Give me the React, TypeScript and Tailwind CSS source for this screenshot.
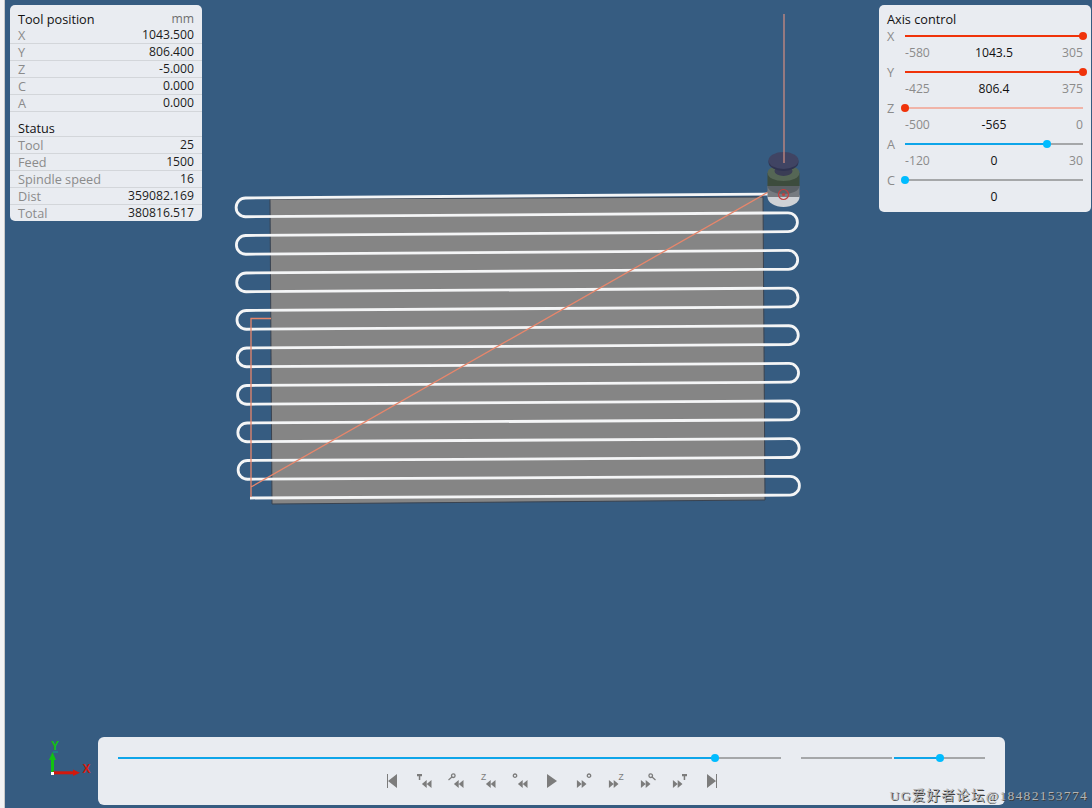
import React from "react";

const font = "[font-family:'Open_Sans','Noto_Sans',sans-serif]";

function Row({ label, value, last }: { label: string; value: string; last?: boolean }) {
  return (
    <div className={`flex items-center justify-between px-2 ${last ? "h-[16px]" : "h-[17px] border-b border-[#d3d6da]"}`}>
      <span className="text-[12.7px] text-[#8b8b8b]">{label}</span>
      <span className="text-[12.2px] text-[#1c1c1c]">{value}</span>
    </div>
  );
}

function ToolPanel() {
  return (
    <div className="w-[192px] h-[216px] rounded-[5px] bg-[#e9ecf1] pt-[5px] leading-[16px] overflow-hidden">
      <div className="flex h-[17px] items-center justify-between px-2">
        <span className="text-[12.7px] text-[#111]">Tool position</span>
        <span className="text-[12.2px] text-[#6f6f6f]">mm</span>
      </div>
      <Row label="X" value="1043.500" />
      <Row label="Y" value="806.400" />
      <Row label="Z" value="-5.000" />
      <Row label="C" value="0.000" />
      <Row label="A" value="0.000" />
      <div className="mt-[8px] flex h-[17px] items-center border-b border-[#d3d6da] px-2 text-[12.7px] text-[#111]">Status</div>
      <Row label="Tool" value="25" />
      <Row label="Feed" value="1500" />
      <Row label="Spindle speed" value="16" />
      <Row label="Dist" value="359082.169" />
      <Row label="Total" value="380816.517" last />
    </div>
  );
}

function Slider({ fill, fillClass, trackClass, knobClass }: { fill: number; fillClass: string; trackClass: string; knobClass: string }) {
  return (
    <div className={`relative h-[2px] w-full ${trackClass}`}>
      <div className={`h-full ${fillClass}`} style={{ width: `${fill}%` }} />
      <div className={`absolute top-[-3px] ml-[-4px] h-[8px] w-[8px] rounded-full ${knobClass}`} style={{ left: `${fill}%` }} />
    </div>
  );
}

function Axis({ name, min, value, max, fill, tone }: { name: string; min: string; value: string; max: string; fill: number; tone: "red" | "pale" | "blue" }) {
  const fillClass = tone === "blue" ? "bg-[#0ea5e9]" : "bg-[#f0330a]";
  const trackClass = tone === "pale" ? "bg-[#f0b4a8]" : "bg-[#a5a7a9]";
  const knobClass = tone === "blue" ? "bg-[#00bcff]" : "bg-[#f0330a]";
  return (
    <div>
      <div className="flex h-[18px] items-center">
        <span className="w-[18px] text-[12.7px] text-[#8b8b8b]">{name}</span>
        <div className="flex-1">
          <Slider fill={fill} fillClass={fillClass} trackClass={trackClass} knobClass={knobClass} />
        </div>
      </div>
      <div className="mb-[8px] ml-[18px] grid h-[10px] grid-cols-3 items-center text-[12.2px]">
        <span className="text-[#8b8b8b]">{min}</span>
        <span className="text-center text-[#111]">{value}</span>
        <span className="text-right text-[#8b8b8b]">{max}</span>
      </div>
    </div>
  );
}

function AxisPanel() {
  return (
    <div className="w-[212px] h-[207px] rounded-[5px] bg-[#e9ecf1] pt-[5px] pl-2 pr-2 leading-[16px]">
      <div className="h-[17px] flex items-center text-[12.7px] text-[#111]">Axis control</div>
      <Axis name="X" min="-580" value="1043.5" max="305" fill={100} tone="red" />
      <Axis name="Y" min="-425" value="806.4" max="375" fill={100} tone="red" />
      <Axis name="Z" min="-500" value="-565" max="0" fill={0} tone="pale" />
      <Axis name="A" min="-120" value="0" max="30" fill={80} tone="blue" />
      <Axis name="C" min="" value="0" max="" fill={0} tone="blue" />
    </div>
  );
}

const ICON = "#7c7c7c";

function Rewind() {
  return <path d="M7 9 L2.2 13 L7 17Z M11.8 9 L7 13 L11.8 17Z" fill={ICON} />;
}

function Mark({ kind }: { kind: "T" | "D" | "Z" | "O" }) {
  if (kind === "T") return <path d="M0.5 3 H5.5 V5.2 H3.8 V9 H2.3 V5.2 H0.5Z" fill={ICON} />;
  if (kind === "D")
    return (
      <g fill="none" stroke={ICON}>
        <circle cx="4.8" cy="4.7" r="1.8" strokeWidth="1.3" />
        <path d="M3.4 6 L0 9" strokeWidth="1.2" />
      </g>
    );
  if (kind === "Z")
    return (
      <text x="0.5" y="9" fontSize="8.5" fill={ICON} fontFamily="'Liberation Sans',sans-serif">
        Z
      </text>
    );
  return <circle cx="2.5" cy="4.7" r="1.7" fill="none" stroke={ICON} strokeWidth="1.3" />;
}

function PlayIcon({ kind }: { kind: string }) {
  return (
    <svg viewBox="0 0 20 20" className="h-5 w-5">
      {kind === "start" && <path d="M5 3 H6 V17 H5Z M15 3 V17 L6 10Z" fill={ICON} />}
      {kind === "end" && <path d="M14 3 H15 V17 H14Z M5 3 V17 L14 10Z" fill={ICON} />}
      {kind === "play" && <path d="M5 3 V17 L15 10Z" fill={ICON} />}
      {["T", "D", "Z", "O"].includes(kind) && (
        <g>
          <g transform="translate(2.5,0)">
            <Mark kind={kind as "T"} />
          </g>
          <g transform="translate(5.7,0)">
            <Rewind />
          </g>
        </g>
      )}
      {["t", "d", "z", "o"].includes(kind) && (
        <g transform="matrix(-1 0 0 1 20 0)">
          <g transform="translate(5.3,0)">
            <Rewind />
          </g>
          {kind === "z" ? (
            <g transform="matrix(-1 0 0 1 8 0)">
              <Mark kind="Z" />
            </g>
          ) : (
            <g transform="translate(2.5,0)">
              <Mark kind={kind.toUpperCase() as "T"} />
            </g>
          )}
        </g>
      )}
    </svg>
  );
}

function BottomPanel() {
  const icons = ["start", "T", "D", "Z", "O", "play", "o", "z", "d", "t", "end"];
  return (
    <div className="h-[68px] w-[907px] rounded-[6px] bg-[#e9ecf1] pl-5 pr-5 pt-[20px]">
      <div className="flex items-center">
        <div className="w-[663px]">
          <Slider fill={90} fillClass="bg-[#0ea5e9]" trackClass="bg-[#a5a7a9]" knobClass="bg-[#00bcff]" />
        </div>
        <div className="ml-5 h-[2px] w-[91px] bg-[#a5a7a9]" />
        <div className="ml-[2px] w-[91px]">
          <Slider fill={50} fillClass="bg-[#0ea5e9]" trackClass="bg-[#a5a7a9]" knobClass="bg-[#00bcff]" />
        </div>
      </div>
      <div className="mt-[12px] ml-[264px] flex w-[340px] items-center justify-between">
        {icons.map((k) => (
          <PlayIcon key={k} kind={k} />
        ))}
      </div>
    </div>
  );
}

function serpentine() {
  const L = (i: number) => 198 + 18.75 * i;
  const R = (i: number) => 194 + 18.82 * i;
  let d = `M770 ${R(0)}`;
  for (let i = 0; i < 16; i += 2) {
    const cl = 245.5 + (i / 14) * 2;
    const r = (L(i + 1) - L(i)) / 2;
    d += ` L${cl} ${L(i)} A${r} ${r} 0 0 0 ${cl} ${L(i + 1)}`;
    const cr = 788 + (i / 14) * 2;
    d += ` L${cr} ${R(i + 1)} A${r} ${r} 0 0 1 ${cr} ${R(i + 2)}`;
  }
  d += ` L250 ${L(16)}`;
  return d;
}

function Scene() {
  return (
    <svg className="absolute inset-0 h-full w-full" viewBox="5 0 1087 808">
      <polygon points="270,199 763,197 765,500 272,504" fill="#858585" stroke="#3a4350" strokeWidth="1" />
      <path d={serpentine()} fill="none" stroke="#f4f5f6" strokeWidth="2.8" />
      <path d="M770 191 L251 487 M251 497 V318.5 H271" fill="none" stroke="#e8866b" strokeWidth="1.3" />
      <ellipse cx="783.5" cy="197" rx="16" ry="10" fill="#cfd2d6" />
      <rect x="767.5" y="186" width="32" height="11" fill="#777b80" />
      <ellipse cx="783.5" cy="186" rx="16" ry="8" fill="#5b6166" />
      <rect x="767.5" y="173" width="32" height="13" fill="#3d4c3d" />
      <ellipse cx="783.5" cy="173" rx="16" ry="8" fill="#556655" />
      <ellipse cx="783.5" cy="171" rx="9" ry="5" fill="#3a3d55" />
      <ellipse cx="783.5" cy="162" rx="15" ry="9" fill="#2f3350" />
      <ellipse cx="783.5" cy="160.5" rx="15" ry="8.5" fill="#404463" />
      <circle cx="783.5" cy="194.5" r="5" fill="none" stroke="#c2403f" strokeWidth="1.2" />
      <circle cx="783.5" cy="194.5" r="1.6" fill="#c2403f" />
      <path d="M784 14 V163" stroke="#c98a80" strokeWidth="1.3" />
      <path d="M52.5 773 V757" stroke="#12c212" strokeWidth="3" />
      <path d="M52.5 752 L49 760 H56Z" fill="#12c212" />
      <path d="M53 772.8 H74" stroke="#d3180c" strokeWidth="3" />
      <path d="M80 772.8 L73 769.5 V776Z" fill="#d3180c" />
      <rect x="51" y="772" width="3" height="3" fill="#fff" />
      <rect x="53" y="751" width="5" height="2" fill="#1f7f86" />
      <text x="51" y="750" fontSize="12" fontWeight="700" fill="#12c212" fontFamily="'Liberation Sans',sans-serif">Y</text>
      <text x="82.5" y="773" fontSize="12" fontWeight="700" fill="#d3180c" fontFamily="'Liberation Sans',sans-serif">X</text>
    </svg>
  );
}

export default function App() {
  return (
    <div className={`flex h-[808px] w-[1092px] overflow-hidden bg-white ${font}`}>
      <div className="h-full w-[5px] bg-[#f3f3f3] border-r border-[#c9c9c9]" />
      <div className="relative h-full flex-1 bg-[#365c81]">
        <Scene />
        <div className="relative flex h-full flex-col justify-between pb-[3px]">
          <div className="flex items-start justify-between pl-[5px] pr-[1px] pt-[5px]">
            <ToolPanel />
            <AxisPanel />
          </div>
          <div className="pl-[93px]">
            <BottomPanel />
          </div>
        </div>
        <div className="absolute bottom-[2px] right-[4px] whitespace-nowrap text-[13.5px] tracking-[1.3px] text-[#b4b4b4] [font-family:'Liberation_Serif','Noto_Sans_CJK_SC',serif] [text-shadow:1px_1px_0_#3c3c3c]">
          UG爱好者论坛@18482153774
        </div>
      </div>
    </div>
  );
}
